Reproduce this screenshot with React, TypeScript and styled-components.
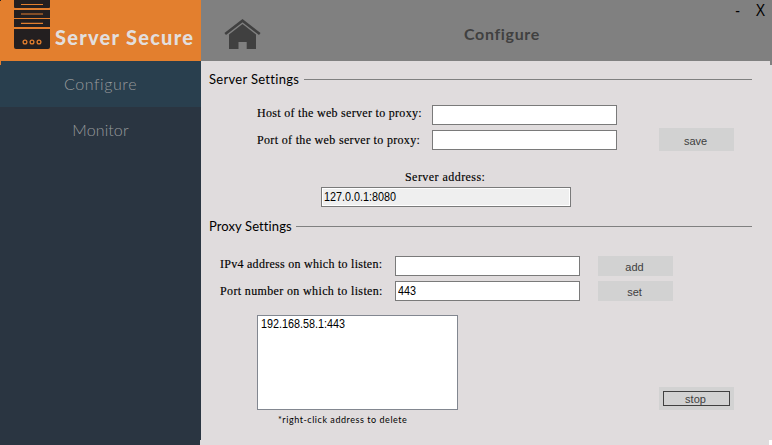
import React from "react";
import styled, { createGlobalStyle } from "styled-components";

const GlobalStyle = createGlobalStyle`
  * { box-sizing: border-box; }
  body { margin: 0; overflow: hidden; background: #e0dcdd; }
`;

const gothic = `"Lato", "Liberation Sans", sans-serif`;
const plain = `"Liberation Sans", sans-serif`;

const Window = styled.div`
  display: grid;
  grid-template-columns: 201px 1fr;
  width: 772px;
  height: 445px;
  overflow: hidden;
  background: #e0dcdd;
`;

const Sidebar = styled.aside`
  display: flex;
  flex-direction: column;
  background: linear-gradient(#e0dcdd, #e0dcdd) 200px 440px / 1px 5px no-repeat, #2a3541;
`;

const Brand = styled.div`
  display: flex;
  height: 61px;
  padding-left: 14px;
  background: linear-gradient(#222, #222) 0 0 / 1px 1px no-repeat, #e37f2e;
`;

const BrandName = styled.h1`
  margin: 24px 0 0 5px;
  font: 900 20px/26px ${gothic};
  letter-spacing: 1.25px;
  color: #e2dedd;
  white-space: nowrap;
`;

const NavItem = styled.a<{ $active?: boolean; $spacing: number }>`
  height: 46px;
  font: 300 16px/46px ${gothic};
  letter-spacing: ${(p) => p.$spacing}px;
  text-align: center;
  color: #989a9c;
  background: ${(p) => (p.$active ? "linear-gradient(#e37f2e, #e37f2e) 0 0 / 1px 4px no-repeat, #293f4e" : "#2a3541")};
`;

const Main = styled.main`
  display: flex;
  flex-direction: column;
  min-width: 0;
  background:
    linear-gradient(#fff, #fff) 568px 440px / 3px 5px no-repeat,
    linear-gradient(#808080, #808080) 569px 61px / 2px 4px no-repeat;
`;

const TopBar = styled.header`
  display: flex;
  height: 61px;
  background: #808080;
`;

const HomeIcon = styled.svg`
  width: 38px;
  height: 32px;
  margin: 18px 0 0 23px;
`;

const PageTitle = styled.h2`
  margin: 21px 0 0 202px;
  width: 80px;
  font: 700 16px/26px ${gothic};
  letter-spacing: 0.65px;
  color: #404040;
`;

const WindowControls = styled.div`
  display: flex;
  margin-left: auto;
  padding: 0 6px 0 0;
  gap: 15px;
  font: 400 16px/22px ${plain};
  color: #000;
`;

const Control = styled.span`
  transform: scaleX(0.88);
`;

const SectionHeading = styled.div<{ $gap: number }>`
  display: flex;
  align-items: center;
  gap: ${(p) => p.$gap}px;
  height: 20px;
  padding: 0 20px 0 8px;
  font: 400 13px/20px ${gothic};
  color: #000;
  white-space: nowrap;

  &::after {
    content: "";
    flex: 1;
    height: 1px;
    margin-top: 1px;
    background: #808080;
  }
`;

const HeadingText = styled.span<{ $width: number; $spacing: number }>`
  width: ${(p) => p.$width}px;
  letter-spacing: ${(p) => p.$spacing}px;
`;

const ServerSection = styled.section`
  height: 147px;
  padding-top: 8px;
`;

const ProxySection = styled.section`
  padding-top: 8px;
`;

const FormGrid = styled.div<{ $top: number; $left: number; $label: number; $gap: number }>`
  display: grid;
  grid-template-columns: ${(p) => p.$label}px 185px 75px;
  grid-auto-rows: 20px;
  row-gap: 5px;
  margin: ${(p) => p.$top}px 0 0 ${(p) => p.$left}px;

  > :nth-child(3n) { margin-left: ${(p) => p.$gap}px; }
  > :nth-child(4) { padding-top: 2px; }
`;

const Label = styled.label<{ $spacing?: number }>`
  font: 400 12px/17px "Liberation Serif", serif;
  letter-spacing: ${(p) => p.$spacing ?? 0.3}px;
  color: #000;
  white-space: nowrap;
  -webkit-text-stroke: 0.15px #000;
`;

const Field = styled.div<{ $readOnly?: boolean }>`
  height: 20px;
  padding: 0 2px;
  border: 1px solid #7a7a7a;
  background: ${(p) => (p.$readOnly ? "#efefef" : "#fff")};
  box-shadow: inset 0 0 0 1px #fff;
  font: 400 12px/18px ${plain};
  color: #000;
`;

const Value = styled.span`
  display: inline-block;
  transform: scaleX(0.9);
  transform-origin: left;
`;

const Button = styled.button<{ $height?: number }>`
  width: 75px;
  height: ${(p) => p.$height ?? 20}px;
  padding: 2px 2px 0 0;
  border: 0;
  background: #d2d2d2;
  font: 400 11px/18px ${plain};
  color: #404040;
`;

const SaveButton = styled(Button)`
  margin-top: -2px;
`;

const StopButton = styled(Button)`
  padding: 1px 2px 0 0;
  margin-top: 72px;
  outline: 1px solid #404040;
  outline-offset: -5px;
`;

const AddressBlock = styled.div`
  width: 250px;
  margin: 18px 0 0 120px;
`;

const AddressLabel = styled(Label)`
  display: block;
  height: 19px;
  padding: 1px 0 0 84px;
`;

const BottomRow = styled.div`
  display: flex;
  align-items: flex-start;
  justify-content: space-between;
  margin: 14px 38px 0 56px;
`;

const ListBox = styled.div`
  width: 201px;
  height: 95px;
  padding: 0 3px;
  border: 1px solid #828790;
  background: #fff;
  font: 400 12px/17px ${plain};
  color: #000;
`;

const Hint = styled.p`
  margin: 3px 0 0 21px;
  font: 400 9px/14px ${gothic};
  letter-spacing: 0.55px;
  color: #000;
  white-space: nowrap;
`;

const ServerLogo = () => (
  <svg width="36" height="50" viewBox="0 0 36 50">
    <g fill="#231f20">
      <rect y="-4" width="36" height="12" rx="1" />
      <rect y="10" width="36" height="8" />
      <rect y="19" width="36" height="8" />
      <path d="M0 29h36v18q0 2-2 2H2q-2 0-2-2z" />
    </g>
    <path d="M7 4.5h22M7 14h22M7 23.3h22" stroke="#e37f2e" strokeWidth="1.2" />
    <g fill="none" stroke="#e37f2e" strokeWidth="1.3">
      <circle cx="11" cy="42" r="1.9" />
      <circle cx="18" cy="42" r="1.9" />
      <circle cx="25" cy="42" r="1.9" />
    </g>
  </svg>
);

export default function App() {
  return (
    <>
      <GlobalStyle />
      <Window>
        <Sidebar>
          <Brand>
            <ServerLogo />
            <BrandName>Server Secure</BrandName>
          </Brand>
          <NavItem $active $spacing={0.6}>Configure</NavItem>
          <NavItem $spacing={0.1}>Monitor</NavItem>
        </Sidebar>
        <Main>
          <TopBar>
            <HomeIcon viewBox="0 0 38 32">
              <path d="M1.2 16L18.5 2.7 35.8 16" fill="none" stroke="#404040" strokeWidth="2.6" />
              <path d="M18.5 6L32 16.5V31H22.7V24H14.5V31H5V16.5z" fill="#404040" />
            </HomeIcon>
            <PageTitle>Configure</PageTitle>
            <WindowControls>
              <Control>-</Control>
              <Control>X</Control>
            </WindowControls>
          </TopBar>
          <ServerSection>
            <SectionHeading $gap={5}>
              <HeadingText $width={90} $spacing={0.3}>Server Settings</HeadingText>
            </SectionHeading>
            <FormGrid $top={16} $left={56} $label={175} $gap={42}>
              <Label>Host of the web server to proxy:</Label>
              <Field />
              <span />
              <Label $spacing={0.33}>Port of the web server to proxy:</Label>
              <Field />
              <SaveButton $height={23}>save</SaveButton>
            </FormGrid>
            <AddressBlock>
              <AddressLabel $spacing={0.45}>Server address:</AddressLabel>
              <Field $readOnly><Value>127.0.0.1:8080</Value></Field>
            </AddressBlock>
          </ServerSection>
          <ProxySection>
            <SectionHeading $gap={5}>
              <HeadingText $width={82} $spacing={0.1}>Proxy Settings</HeadingText>
            </SectionHeading>
            <FormGrid $top={20} $left={19} $label={175} $gap={18}>
              <Label $spacing={0.27}>IPv4 address on which to listen:</Label>
              <Field />
              <Button>add</Button>
              <Label $spacing={0.36}>Port number on which to listen:</Label>
              <Field><Value>443</Value></Field>
              <Button>set</Button>
            </FormGrid>
            <BottomRow>
              <div>
                <ListBox><Value>192.168.58.1:443</Value></ListBox>
                <Hint>*right-click address to delete</Hint>
              </div>
              <StopButton $height={23}>stop</StopButton>
            </BottomRow>
          </ProxySection>
        </Main>
      </Window>
    </>
  );
}
